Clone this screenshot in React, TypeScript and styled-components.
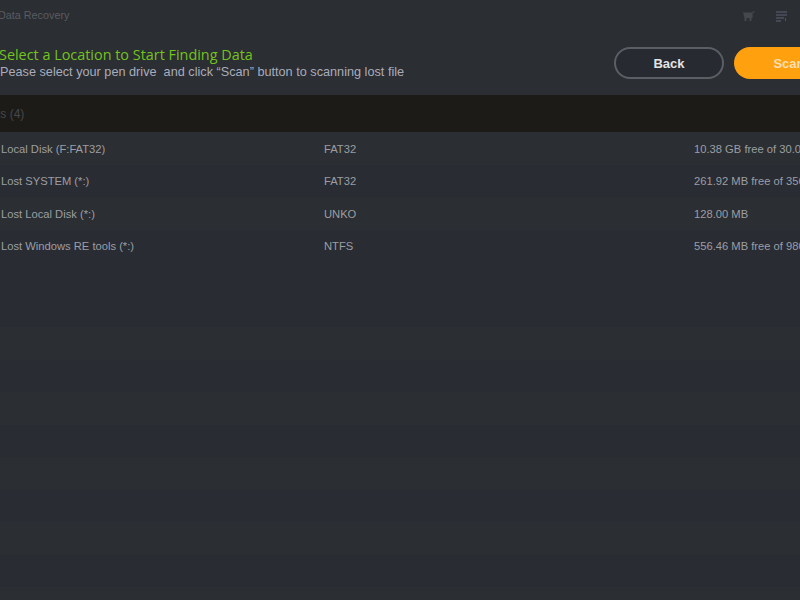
import React from "react";
import styled, { createGlobalStyle } from "styled-components";

const GlobalStyle = createGlobalStyle`
  html, body {
    margin: 0;
    padding: 0;
    background: #2a2d33;
    overflow: hidden;
  }
`;

const Page = styled.div`
  width: 800px;
  height: 600px;
  overflow: hidden;
  background: #2a2d33;
  font-family: "Liberation Sans", Arial, sans-serif;
`;

const TitleBar = styled.div`
  display: flex;
  align-items: center;
  justify-content: space-between;
  height: 30px;
  background: #2b2e32;
  padding: 2px 13px 0 0;
  box-sizing: border-box;
`;

const AppName = styled.div`
  margin-left: -2px;
  margin-top: -3px;
  font-size: 10.8px;
  color: #595c62;
`;

const WindowIcons = styled.div`
  display: flex;
  align-items: center;
  gap: 21px;
`;

const Header = styled.div`
  display: flex;
  align-items: flex-start;
  justify-content: space-between;
  height: 65px;
  background: #2b2e32;
`;

const Intro = styled.div`
  padding-top: 16px;
`;

const Heading = styled.div`
  font-family: "Open Sans", sans-serif;
  font-size: 14.4px;
  line-height: 17px;
  color: #73c31e;
  margin-left: -1px;
`;

const Hint = styled.div`
  font-size: 12.7px;
  line-height: 16px;
  color: #aaacbb;
  margin-top: 1px;
`;

const Actions = styled.div`
  display: flex;
  gap: 10px;
  padding-top: 17px;
  margin-right: -44px;
`;

const PillButton = styled.button<{ $primary?: boolean }>`
  width: 110px;
  height: 32px;
  box-sizing: border-box;
  border-radius: 16px;
  border: ${(p) => (p.$primary ? "none" : "2px solid #5b5e64")};
  background: ${(p) => (p.$primary ? "#ffa00f" : "#272a30")};
  color: ${(p) => (p.$primary ? "#ffdfae" : "#e4e4e4")};
  font-family: "Liberation Sans", Arial, sans-serif;
  font-size: 13px;
  font-weight: 700;
  padding: 0;
`;

const GroupBar = styled.div`
  height: 37px;
  display: flex;
  align-items: center;
  background: #1c1b18;
  font-size: 12px;
  color: #47484a;
  padding-left: 1px;
`;

const GroupLabel = styled.span`
  margin-left: -24px;
`;

const Row = styled.div<{ $tint: boolean }>`
  display: grid;
  grid-template-columns: 323px 370px 200px;
  align-items: center;
  box-sizing: border-box;
  height: 32.5px;
  padding: 0.6px 0 0 1px;
  font-size: 11.2px;
  color: #9c9ea3;
  white-space: nowrap;
  background: ${(p) => (p.$tint ? "#292c33" : "#2b2e32")};
`;

const Cell = styled.div`
  overflow: visible;
`;

const disks = [
  { name: "Local Disk (F:FAT32)", fs: "FAT32", size: "10.38 GB free of 30.00 GB" },
  { name: "Lost SYSTEM (*:)", fs: "FAT32", size: "261.92 MB free of 356.00 MB" },
  { name: "Lost Local Disk (*:)", fs: "UNKO", size: "128.00 MB" },
  { name: "Lost Windows RE tools (*:)", fs: "NTFS", size: "556.46 MB free of 980.00 MB" },
];

// the empty part of the list keeps its stripes down to the window edge
const rows = [...disks, ...Array.from({ length: 11 }, () => ({ name: "", fs: "", size: "" }))];

export default function App() {
  return (
    <Page>
      <GlobalStyle />
      <TitleBar>
        <AppName>Data Recovery</AppName>
        <WindowIcons>
          <svg width="12" height="11" viewBox="0 0 12 11" fill="none">
            <path d="M0 1.500h9v5.500H1.500z" fill="#45484d" />
            <path d="M9 7V2L11.500 0.500" stroke="#45484d" strokeWidth="1.200" />
            <path d="M2.500 7v3M7.500 7v3" stroke="#45484d" strokeWidth="2" />
          </svg>
          <svg width="11" height="11" viewBox="0 0 11 11" fill="none">
            <path d="M0 1h11M0 4h11M0 7h8M0 10h5" stroke="#4f5260" strokeWidth="1.300" />
            <path d="M9.500 7v3" stroke="#4f5260" strokeWidth="1" />
          </svg>
        </WindowIcons>
      </TitleBar>
      <Header>
        <Intro>
          <Heading>Select a Location to Start Finding Data</Heading>
          <Hint>Pease select your pen drive&nbsp; and click “Scan” button to scanning lost file</Hint>
        </Intro>
        <Actions>
          <PillButton>Back</PillButton>
          <PillButton $primary>Scan</PillButton>
        </Actions>
      </Header>
      <GroupBar>
        <GroupLabel>Disks (4)</GroupLabel>
      </GroupBar>
      {rows.map((d, i) => (
        <Row key={i} $tint={i % 2 === 1 || i === 4}>
          <Cell>{d.name}</Cell>
          <Cell>{d.fs}</Cell>
          <Cell>{d.size}</Cell>
        </Row>
      ))}
    </Page>
  );
}
